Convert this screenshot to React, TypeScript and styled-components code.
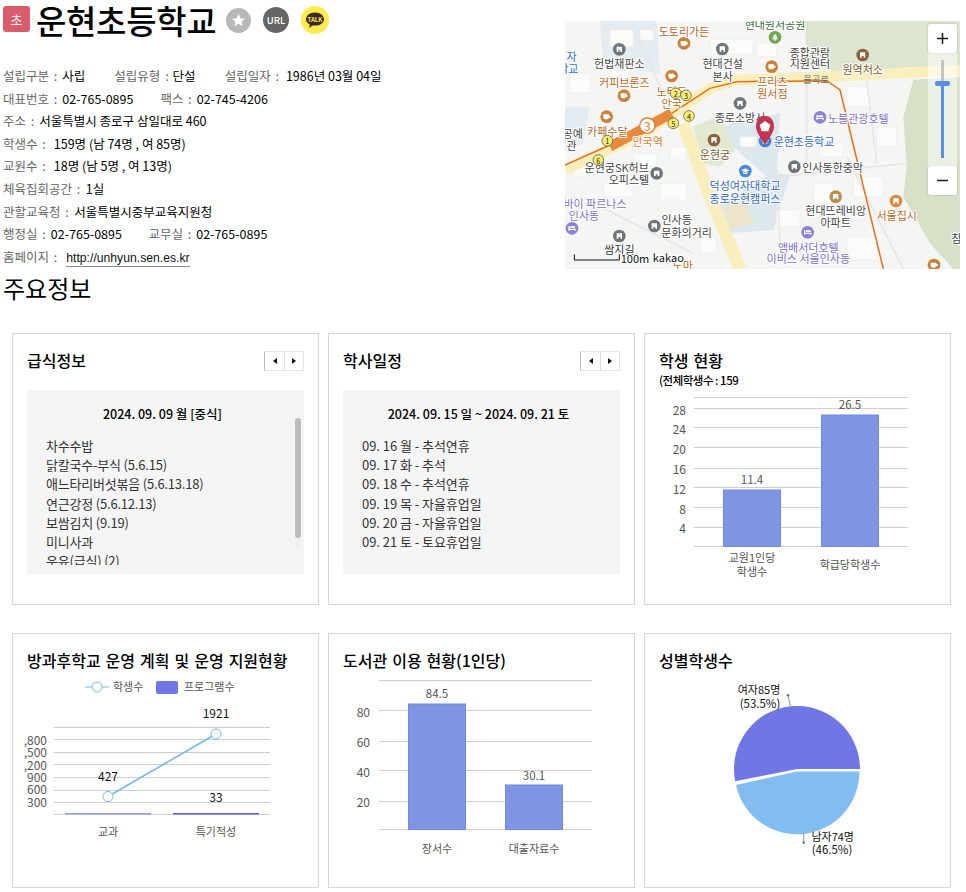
import React from 'react';
import styled, { createGlobalStyle } from 'styled-components';

const GlobalStyle = createGlobalStyle`
  html, body {
    margin: 0;
    padding: 0;
    background: #fff;
    font-family: "Noto Sans CJK KR", "Noto Sans", sans-serif;
    color: #000;
  }
`;

const Page = styled.div`
  width: 966px;
  height: 892px;
  overflow: hidden;
`;

const Top = styled.section`
  display: flex;
  justify-content: space-between;
  padding: 0 6px 0 3px;
  height: 270px;
`;

const Summary = styled.div`
  display: flex;
  flex-direction: column;
`;

const TitleRow = styled.div`
  display: flex;
  align-items: center;
  height: 40px;
  margin-bottom: 25px;
`;

const Badge = styled.span`
  width: 27px;
  height: 26px;
  margin-top: -2px;
  border-radius: 3px;
  background: #d95c6c;
  color: #fff;
  font-size: 13px;
  display: flex;
  align-items: center;
  justify-content: center;
  margin-right: 6px;
`;

const SchoolName = styled.h1`
  margin: 0 10px 0 0;
  font-size: 33px;
  font-weight: 500;
  line-height: 38px;
  letter-spacing: -0.3px;
`;

const RoundIcon = styled.svg`
  display: block;
  margin-right: 12px;
  flex: none;
`;

const InfoRow = styled.div`
  display: flex;
  height: 22.6px;
  line-height: 22.6px;
  font-size: 12.5px;
  white-space: nowrap;
`;

const Label = styled.span<{ $gap?: number }>`
  color: #666;
  word-spacing: 2px;
  margin-right: ${({ $gap }) => $gap ?? 5}px;
`;

const Value = styled.span<{ $gap?: number }>`
  color: #000;
  margin-right: ${({ $gap }) => $gap ?? 29}px;
`;

const HomeLink = styled.a`
  color: #111;
  font-family: "Liberation Sans", sans-serif;
  font-size: 12.2px;
  text-decoration: none;
  border-bottom: 1px solid #888;
  height: 18px;
  line-height: 20px;
  margin-top: 2px;
`;

const MapFrame = styled.div`
  position: relative;
  width: 395px;
  height: 248px;
  margin-top: 21px;
  overflow: hidden;
`;

const MapCanvas = styled.svg`
  display: block;
  background: #f5f5f4;
`;

const MapLabel = styled.text<{ $tone: string; $size?: number; $plain?: boolean }>`
  fill: ${({ $tone }) => $tone};
  font-size: ${({ $size }) => $size ?? 33}px;
  text-anchor: middle;
  dominant-baseline: central;
  paint-order: stroke;
  stroke: ${({ $plain }) => ($plain ? 'none' : '#fff')};
  stroke-width: 6px;
  stroke-linejoin: round;
`;

const ZoomControl = styled.div`
  position: absolute;
  top: 3px;
  right: 3px;
  width: 29px;
  display: flex;
  flex-direction: column;
`;

const ZoomButton = styled.div`
  height: 29px;
  background: #fff;
  color: #222;
  border-radius: 2px;
  box-shadow: 0 0 2px rgba(0, 0, 0, 0.25);
  display: flex;
  align-items: center;
  justify-content: center;
`;

const ZoomTrack = styled.div`
  position: relative;
  height: 113px;
  background: rgba(255, 255, 255, 0.55);
`;

const TrackOff = styled.div`
  position: absolute;
  left: 13px;
  top: 7px;
  width: 3px;
  height: 24px;
  background: #c4c4c4;
`;

const TrackOn = styled.div`
  position: absolute;
  left: 13px;
  top: 30px;
  width: 3px;
  height: 75px;
  background: #5b90ea;
`;

const TrackHandle = styled.div`
  position: absolute;
  left: 7px;
  top: 28px;
  width: 15px;
  height: 5px;
  border-radius: 2px;
  background: #5b90ea;
`;

const SectionTitle = styled.h2`
  margin: 0;
  padding-left: 3px;
  font-size: 24px;
  font-weight: 400;
  height: 36px;
  line-height: 36px;
`;

const Grid = styled.div`
  display: grid;
  grid-template-columns: repeat(3, 307px);
  grid-template-rows: 272px 255px;
  column-gap: 9px;
  row-gap: 28px;
  padding: 27px 0 0 12px;
`;

const Card = styled.article`
  box-sizing: border-box;
  border: 1px solid #d6d6d6;
  display: flex;
  flex-direction: column;
  overflow: hidden;
`;

const CardHead = styled.header`
  display: flex;
  align-items: center;
  justify-content: space-between;
  height: 28px;
  padding: 12px 14px 0;
`;

const CardTitle = styled.h3`
  margin: 0;
  font-size: 16px;
  font-weight: 500;
  word-spacing: 1.4px;
  white-space: nowrap;
`;

const Pager = styled.div`
  display: flex;
  margin-top: 2px;
`;

const PagerButton = styled.button<{ $dir: 'prev' | 'next' }>`
  width: 20px;
  height: 20px;
  padding: 0;
  background: #fff;
  border: 1px solid #e6e6e6;
  border-left: ${({ $dir }) => ($dir === 'prev' ? '1px solid #bbb' : '1px solid #ddd')};
  border-right: ${({ $dir }) => ($dir === 'prev' ? 'none' : '1px solid #e6e6e6')};
  display: flex;
  align-items: center;
  justify-content: center;
  &::before {
    content: '';
    border-top: 3px solid transparent;
    border-bottom: 3px solid transparent;
    border-right: ${({ $dir }) => ($dir === 'prev' ? '4px solid #111' : 'none')};
    border-left: ${({ $dir }) => ($dir === 'next' ? '4px solid #111' : 'none')};
  }
`;

const InfoBox = styled.div`
  position: relative;
  margin: 16px 14px 0;
  height: 184px;
  background: #f5f5f5;
  padding: 14px 0 0 19px;
  box-sizing: border-box;
`;

const BoxDate = styled.div`
  font-weight: 500;
  font-size: 12.5px;
  line-height: 20px;
  height: 20px;
  text-align: center;
  padding-right: 25px;
  margin-bottom: 12px;
`;

const BoxList = styled.ul`
  margin: 0;
  padding: 0;
  list-style: none;
  height: 129px;
  overflow: hidden;
  color: #333;
  font-size: 13px;
`;

const BoxItem = styled.li<{ $spacing: number }>`
  line-height: 19.2px;
  white-space: nowrap;
  letter-spacing: ${({ $spacing }) => $spacing}px;
`;

const ScrollTrack = styled.div`
  position: absolute;
  top: 28px;
  right: 3px;
  width: 6px;
  height: 129px;
  background: #efefef;
  border-radius: 3px;
`;

const ScrollThumb = styled.div`
  width: 6px;
  height: 120px;
  background: #bdbdbd;
  border-radius: 3px;
`;

const SubNote = styled.div`
  padding: 0 14px;
  font-size: 11.5px;
  line-height: 12px;
  height: 16px;
  font-weight: 500;
  letter-spacing: -0.5px;
`;

const Chart = styled.svg`
  display: block;
  flex: none;
`;

const Gridline = styled.line`
  stroke: #cfcfcf;
  stroke-width: 1;
`;

const AxisText = styled.text<{ $anchor?: string; $dark?: boolean; $size?: number }>`
  fill: ${({ $dark }) => ($dark ? '#111' : '#555')};
  font-size: ${({ $size }) => $size ?? 11.5}px;
  text-anchor: ${({ $anchor }) => $anchor ?? 'middle'};
  dominant-baseline: central;
`;

const bars = '#7f94e2';
const barEdge = '#7088e6';

type Bar = { x: number; w: number; top: number; value: string; valueY: number; label: string[]; labelY: number };

// every chart is drawn in page coordinates, viewBox picks the part of the page under the card
const BarChart = ({
  box,
  left,
  right,
  lines,
  ticks,
  tickX,
  base,
  items,
}: {
  box: number[];
  left: number;
  right: number;
  lines: number[];
  ticks: [string, number][];
  tickX: number;
  base: number;
  items: Bar[];
}) => (
  <Chart width={box[2]} height={box[3]} viewBox={box.join(' ')}>
    {lines.map((y) => (
      <Gridline key={y} x1={left} x2={right} y1={y} y2={y} />
    ))}
    {ticks.map(([t, y]) => (
      <AxisText key={t} x={tickX} y={y} $anchor="end" $size={12}>
        {t}
      </AxisText>
    ))}
    {items.map((b) => (
      <g key={b.value}>
        <rect x={b.x} y={b.top} width={b.w} height={base - b.top} fill={bars} stroke={barEdge} strokeWidth={1} />
        <AxisText x={b.x + b.w / 2} y={b.valueY}>
          {b.value}
        </AxisText>
        {b.label.map((l, i) => (
          <AxisText key={l} x={b.x + b.w / 2} y={b.labelY + i * 14} $size={11}>
            {l}
          </AxisText>
        ))}
      </g>
    ))}
  </Chart>
);

const LineChart = () => (
  <Chart width={305} height={212} viewBox="13 674 305 212">
    <line x1={85} x2={109} y1={687} y2={687} stroke="#7ab9f0" strokeWidth={1} />
    <circle cx={97} cy={687} r={5} fill="#fff" stroke="#7ab9f0" strokeWidth={1} />
    <AxisText x={113} y={686} $anchor="start" $size={11}>
      학생수
    </AxisText>
    <rect x={156} y={681} width={22} height={13} rx={2} fill="#7076e4" />
    <AxisText x={184} y={686} $anchor="start" $size={11}>
      프로그램수
    </AxisText>
    {[727.5, 739.5, 752.5, 764.5, 777.5, 790.5, 802.5, 814.5].map((y) => (
      <Gridline key={y} x1={54} x2={270} y1={y} y2={y} />
    ))}
    {([
      [',800', 739],
      [',500', 751],
      [',200', 764],
      ['900', 776],
      ['600', 788],
      ['300', 801],
    ] as [string, number][]).map(([t, y]) => (
      <AxisText key={t} x={47} y={y} $anchor="end" $size={12}>
        {t}
      </AxisText>
    ))}
    <rect x={65} y={813} width={86} height={1.5} fill="#9a9ee8" />
    <rect x={173} y={813} width={86} height={1.5} fill="#5b62de" />
    <line x1={108} y1={796.5} x2={216} y2={734} stroke="#72b6f0" strokeWidth={1.5} />
    <circle cx={108} cy={796.5} r={5} fill="#fff" stroke="#72b6f0" strokeWidth={1} />
    <circle cx={216} cy={734} r={5} fill="#fff" stroke="#72b6f0" strokeWidth={1} />
    <AxisText x={108} y={775} $dark $size={12}>427</AxisText>
    <AxisText x={216} y={712} $dark $size={12}>1921</AxisText>
    <AxisText x={216} y={796} $dark $size={12}>33</AxisText>
    <AxisText x={108} y={831} $size={11}>교과</AxisText>
    <AxisText x={216} y={831} $size={11}>특기적성</AxisText>
  </Chart>
);

const PieChart = () => (
  <Chart width={305} height={212} viewBox="645 674 305 212">
    <path d="M797 769 H860 A63 63 0 1 0 735.2 781.2 Z" fill="#7076e4" />
    <path d="M797 771.5 H859.4 A62.4 62.4 0 0 1 736 785 Z" fill="#82bdf0" />
    <line x1={790.7} y1={707.7} x2={788} y2={695.3} stroke="#8a97a5" strokeWidth={1} />
    <circle cx={788} cy={695.3} r={1.2} fill="#5f6c7a" />
    <line x1={803.7} y1={832.7} x2={803.7} y2={842.7} stroke="#8a97a5" strokeWidth={1} />
    <circle cx={803.7} cy={842.7} r={1.2} fill="#5f6c7a" />
    <AxisText x={759} y={689} $dark $size={11}>여자85명</AxisText>
    <AxisText x={760} y={703} $dark>(53.5%)</AxisText>
    <AxisText x={832.7} y={836} $dark $size={11}>남자74명</AxisText>
    <AxisText x={832} y={849} $dark>(46.5%)</AxisText>
  </Chart>
);

const brown = '#b5691f';
const dark = '#444';
const purple = '#7d72c8';
const blue = '#3068c4';

// map coordinates are 3x the page pixels, so 33 here is 11px on screen
const mapLabels: [string, number, number, string][] = [
  ['현대원서공원', 645, 42, '#3f6b45'],
  ['도토리가든', 372, 62, brown],
  ['자', 35, 138, blue],
  ['학교', 25, 175, blue],
  ['헌법재판소', 178, 158, dark],
  ['현대건설', 488, 158, dark],
  ['본사', 488, 197, dark],
  ['종합관람', 750, 127, dark],
  ['지원센터', 750, 160, dark],
  ['원역처소', 908, 177, '#7c5a30'],
  ['커피브론즈', 193, 217, brown],
  ['프리츠', 637, 213, brown],
  ['원서점', 637, 250, brown],
  ['노티드', 335, 243, brown],
  ['안국', 335, 280, brown],
  ['종로소방서', 540, 320, dark],
  ['노블관광호텔', 895, 323, purple],
  ['카페수달', 142, 362, brown],
  ['안국역', 263, 392, '#e8792b'],
  ['공예', 38, 368, dark],
  ['관', 35, 405, dark],
  ['운현궁', 465, 431, '#7c5a30'],
  ['운현초등학교', 732, 393, blue],
  ['운현궁SK허브', 170, 470, dark],
  ['오피스텔', 207, 507, dark],
  ['인사동한중막', 818, 472, dark],
  ['덕성여자대학교', 555, 525, blue],
  ['종로운현캠퍼스', 555, 563, blue],
  ['바이 파르나스', 105, 578, purple],
  ['인사동', 72, 615, purple],
  ['현대뜨레비앙', 827, 600, dark],
  ['아파트', 827, 637, dark],
  ['서울집시', 1010, 616, brown],
  ['인사동', 350, 628, dark],
  ['문화의거리', 380, 665, dark],
  ['앰배서더호텔', 745, 710, purple],
  ['이비스 서울인사동', 745, 745, purple],
  ['쌈지길', 178, 716, '#333'],
  ['도마', 368, 765, brown],
  ['참', 1190, 685, dark],
];

type IconKind = 'cup' | 'building' | 'tree' | 'bed' | 'cap';

const mapIcons: [number, number, string, IconKind][] = [
  [372, 100, '#c9823c', 'cup'], [335, 198, '#c9823c', 'cup'], [192, 257, '#c9823c', 'cup'], [140, 320, '#c9823c', 'cup'],
  [635, 170, '#c9823c', 'cup'], [1122, 765, '#c9823c', 'cup'], [178, 118, '#70757a', 'building'], [487, 117, '#70757a', 'building'],
  [540, 280, '#70757a', 'building'], [290, 490, '#70757a', 'building'], [703, 470, '#70757a', 'building'], [283, 648, '#70757a', 'building'],
  [178, 678, '#70757a', 'building'], [645, 82, '#6fa84f', 'tree'], [908, 135, '#8a5f3c', 'building'], [462, 390, '#8a5f3c', 'building'],
  [827, 560, '#b98d4c', 'building'], [1008, 573, '#d98b40', 'building'], [780, 322, '#8b83d6', 'bed'], [36, 655, '#8b83d6', 'bed'],
  [743, 667, '#8b83d6', 'bed'], [556, 483, '#4a8ad8', 'cap'], [615, 393, '#3f82d2', 'cap'],
];

const iconGlyph: Record<IconKind, string> = {
  cup: 'M-10-7H7V-3H11V4H6C5 7 3 8 0 8H-3C-7 8-10 5-10 1Z',
  building: 'M-8-8H8V8H3V3H-3V8H-8Z',
  tree: 'M0-11L7-2H4L9 6H2V10H-2V6H-9L-4-2H-7Z',
  bed: 'M-11-7H-7V1H11V8H8V5H-8V8H-11ZM-5-6H9V-1H-5Z',
  cap: 'M0-8L12-2 0 4-12-2ZM-7 2L0 6 7 2V7L0 10-7 7Z',
};

const exits: [string, number, number][] = [
  ['1', 142, 392],
  ['2', 347, 250],
  ['3', 378, 256],
  ['4', 387, 318],
  ['5', 340, 340],
  ['6', 115, 450],
];

const blocks: number[][] = [
  [150, 60, 70, 50], [450, 88, 130, 45], [240, 60, 40, 30], [590, 100, 60, 40], [860, 230, 70, 60],
  [150, 180, 60, 30], [30, 190, 60, 60], [220, 430, 70, 40], [300, 520, 80, 50], [130, 520, 90, 40],
  [760, 520, 60, 90], [880, 500, 90, 60], [650, 600, 70, 50], [860, 680, 90, 70], [40, 470, 40, 30],
  [540, 380, 50, 30], [330, 410, 50, 40], [780, 400, 70, 40], [950, 350, 60, 60], [420, 680, 50, 50],
];

const MapArt = () => (
  <MapCanvas width={395} height={248} viewBox="15 33 1185 744">
    <path d="M735 33H1200V165L830 185 740 160Z" fill="#dce5cf" />
    <path d="M1060 210L1030 320 1040 470 1030 560 1110 700 1180 777H1200V200Z" fill="#d6e1c8" />
    <path d="M120 33H290L300 190 130 170Z" fill="#e4ecf1" />
    <path d="M15 290H90L70 400 15 420Z" fill="#e4ecf1" />
    <path d="M470 350L660 310 650 490 690 495 640 660 500 670 465 590 620 500 530 420Z" fill="#dde7ee" />
    <path d="M400 350L480 315 525 420 480 470 430 460Z" fill="#e1e9d0" />
    <path d="M490 590L560 580 580 640 510 655Z" fill="#ece4cb" />
    {blocks.map(([x, y, w, h]) => (
      <rect key={`${x}-${y}`} x={x} y={y} width={w} height={h} rx={4} fill="#fbfbfa" stroke="#ececea" strokeWidth={2} />
    ))}
    <path d="M740 210V470M660 500L1040 460M860 440L1030 777M60 560L400 730M650 470L660 700M240 90L330 300M920 210L950 460" fill="none" stroke="#e6e6e4" strokeWidth={5} />
    <path d="M15 480L250 370 370 290 450 235 530 210 800 200 1200 180" fill="none" stroke="#f9efbd" strokeWidth={32} />
    <path d="M370 340L450 560 540 777" fill="none" stroke="#f9efbd" strokeWidth={38} />
    <path d="M15 465L150 405M335 310L450 235 530 215 800 212 840 240 970 777" fill="none" stroke="#e5711c" strokeWidth={4.5} />
    <path d="M150 410L335 310" fill="none" stroke="#e58a3e" strokeWidth={30} />
    {mapIcons.map(([x, y, c, kind]) => (
      <g key={`${x}-${y}`} transform={`translate(${x} ${y})`}>
        <circle r={19} fill={c} />
        <path d={iconGlyph[kind]} fill="#fff" />
      </g>
    ))}
    {mapLabels.map(([t, x, y, c]) => (
      <MapLabel key={`${t}-${x}`} x={x} y={y} $tone={c}>
        {t}
      </MapLabel>
    ))}
    <MapLabel x={768} y={208} $tone="#6b6b5a" $size={28} $plain>율곡로</MapLabel>
    {exits.map(([n, x, y]) => (
      <g key={n}>
        <circle cx={x} cy={y} r={16} fill="#f8ed6e" stroke="#444" strokeWidth={2} />
        <MapLabel x={x} y={y} $tone="#222" $size={22} $plain>
          {n}
        </MapLabel>
      </g>
    ))}
    <circle cx={262} cy={347} r={23} fill="#fff" stroke="#e8792b" strokeWidth={4} />
    <MapLabel x={262} y={347} $tone="#e8792b" $size={36} $plain>3</MapLabel>
    <path d="M615 318C593 318 588 338 588 350 588 368 605 385 615 406 625 385 642 368 642 350 642 338 637 318 615 318Z" fill="#c2344f" />
    <path d="M615 333L631 345 625 364H605L599 345Z" fill="#fff" />
    <path d="M43 733V750H178V733" fill="none" stroke="#111" strokeWidth={3} />
    <MapLabel x={225} y={745} $tone="#111">100m</MapLabel>
    <MapLabel x={325} y={742} $tone="#111">kakao</MapLabel>
  </MapCanvas>
);

const Info = ({ items }: { items: [string, React.ReactNode, number?, number?][] }) => (
  <InfoRow>
    {items.map(([label, value, labelGap, valueGap]) => (
      <React.Fragment key={label}>
        <Label $gap={labelGap}>{label} :</Label>
        <Value $gap={valueGap}>{value}</Value>
      </React.Fragment>
    ))}
  </InfoRow>
);

const mealLines = [
  '차수수밥',
  '닭칼국수-부식 (5.6.15)',
  '애느타리버섯볶음 (5.6.13.18)',
  '연근강정 (5.6.12.13)',
  '보쌈김치 (9.19)',
  '미니사과',
  '우유(급식) (2)',
];

const scheduleLines = [
  '09. 16 월 - 추석연휴',
  '09. 17 화 - 추석',
  '09. 18 수 - 추석연휴',
  '09. 19 목 - 자율휴업일',
  '09. 20 금 - 자율휴업일',
  '09. 21 토 - 토요휴업일',
];

const Arrows = () => (
  <Pager>
    <PagerButton $dir="prev" />
    <PagerButton $dir="next" />
  </Pager>
);

export default function App() {
  return (
    <Page>
      <GlobalStyle />
      <Top>
        <Summary>
          <TitleRow>
            <Badge>초</Badge>
            <SchoolName>운현초등학교</SchoolName>
            <RoundIcon width={25} height={25} viewBox="0 0 25 25">
              <circle cx={12.5} cy={12.5} r={12.5} fill="#b8b8b8" />
              <path d="M12.5 6l1.9 4.3 4.6.4-3.5 3 1.1 4.6-4.1-2.5-4.1 2.5 1.1-4.6-3.5-3 4.6-.4z" fill="#fff" />
            </RoundIcon>
            <RoundIcon width={26} height={26} viewBox="0 0 26 26">
              <circle cx={13} cy={13} r={13} fill="#666" />
              <text x={13} y={16.5} textAnchor="middle" fontSize={9.5} fontWeight={500} fill="#fff">URL</text>
            </RoundIcon>
            <RoundIcon width={28} height={28} viewBox="0 0 28 28">
              <circle cx={14} cy={14} r={14} fill="#fcea4f" />
              <path d="M14 6.5C8.5 6.5 5 9.6 5 13.2c0 2.3 1.5 4.2 3.8 5.3L8 22l3.6-2.6c.8.1 1.6.2 2.4.2 5.5 0 9-3 9-6.4s-3.5-6.7-9-6.7z" fill="#3a2a20" />
              <text x={14} y={15.8} textAnchor="middle" fontSize={6} fontWeight={700} fill="#fcea4f">TALK</text>
            </RoundIcon>
          </TitleRow>
          <Info items={[['설립구분', '사립'], ['설립유형', '단설', 4, 29], ['설립일자', '1986년 03월 04일', 7]]} />
          <Info items={[['대표번호', '02-765-0895', 5, 27], ['팩스', '02-745-4206', 5]]} />
          <Info items={[['주소', '서울특별시 종로구 삼일대로 460']]} />
          <Info items={[['학생수', '159명 (남 74명 , 여 85명)', 8]]} />
          <Info items={[['교원수', '18명 (남 5명 , 여 13명)', 8]]} />
          <Info items={[['체육집회공간', '1실', 5.5]]} />
          <Info items={[['관할교육청', '서울특별시중부교육지원청', 5.5]]} />
          <Info items={[['행정실', '02-765-0895', 5, 26.5], ['교무실', '02-765-0895', 5]]} />
          <InfoRow>
            <Label $gap={9}>홈페이지 :</Label>
            <HomeLink>http://unhyun.sen.es.kr</HomeLink>
          </InfoRow>
        </Summary>
        <MapFrame>
          <MapArt />
          <ZoomControl>
            <ZoomButton>
              <svg width={13} height={13} viewBox="0 0 13 13"><path d="M6.5 1v11M1 6.5h11" stroke="#222" strokeWidth={1.6} /></svg>
            </ZoomButton>
            <ZoomTrack>
              <TrackOff />
              <TrackOn />
              <TrackHandle />
            </ZoomTrack>
            <ZoomButton>
              <svg width={13} height={13} viewBox="0 0 13 13"><path d="M1 6.5h11" stroke="#222" strokeWidth={1.6} /></svg>
            </ZoomButton>
          </ZoomControl>
        </MapFrame>
      </Top>
      <SectionTitle>주요정보</SectionTitle>
      <Grid>
        <Card>
          <CardHead>
            <CardTitle>급식정보</CardTitle>
            <Arrows />
          </CardHead>
          <InfoBox>
            <BoxDate>2024. 09. 09 월 [중식]</BoxDate>
            <BoxList>
              {mealLines.map((l) => (
                <BoxItem key={l} $spacing={-0.2}>{l}</BoxItem>
              ))}
            </BoxList>
            <ScrollTrack>
              <ScrollThumb />
            </ScrollTrack>
          </InfoBox>
        </Card>
        <Card>
          <CardHead>
            <CardTitle>학사일정</CardTitle>
            <Arrows />
          </CardHead>
          <InfoBox>
            <BoxDate>2024. 09. 15 일 ~ 2024. 09. 21 토</BoxDate>
            <BoxList>
              {scheduleLines.map((l) => (
                <BoxItem key={l} $spacing={-0.05}>{l}</BoxItem>
              ))}
            </BoxList>
          </InfoBox>
        </Card>
        <Card>
          <CardHead>
            <CardTitle>학생 현황</CardTitle>
          </CardHead>
          <SubNote>(전체학생수 : 159</SubNote>
          <BarChart
            box={[645, 390, 305, 210]}
            left={694}
            right={908}
            lines={[397.5, 408.5, 427.5, 447.5, 468.5, 487.5, 507.5, 527.5, 546.5]}
            ticks={[['28', 409], ['24', 428], ['20', 448], ['16', 468], ['12', 488], ['8', 508], ['4', 527]]}
            tickX={686}
            base={546.5}
            items={[
              { x: 723.5, w: 57, top: 490, value: '11.4', valueY: 479, label: ['교원1인당', '학생수'], labelY: 557 },
              { x: 821.5, w: 57, top: 415, value: '26.5', valueY: 404, label: ['학급당학생수'], labelY: 564 },
            ]}
          />
        </Card>
        <Card>
          <CardHead>
            <CardTitle>방과후학교 운영 계획 및 운영 지원현황</CardTitle>
          </CardHead>
          <LineChart />
        </Card>
        <Card>
          <CardHead>
            <CardTitle>도서관 이용 현황(1인당)</CardTitle>
          </CardHead>
          <BarChart
            box={[329, 674, 305, 212]}
            left={379}
            right={592}
            lines={[680.5, 710.5, 741.5, 770.5, 801.5, 829.5]}
            ticks={[['80', 711], ['60', 741], ['40', 771], ['20', 801]]}
            tickX={370}
            base={829.5}
            items={[
              { x: 408.5, w: 57, top: 704, value: '84.5', valueY: 693, label: ['장서수'], labelY: 848 },
              { x: 505.5, w: 57, top: 785, value: '30.1', valueY: 775, label: ['대출자료수'], labelY: 848 },
            ]}
          />
        </Card>
        <Card>
          <CardHead>
            <CardTitle>성별학생수</CardTitle>
          </CardHead>
          <PieChart />
        </Card>
      </Grid>
    </Page>
  );
}
